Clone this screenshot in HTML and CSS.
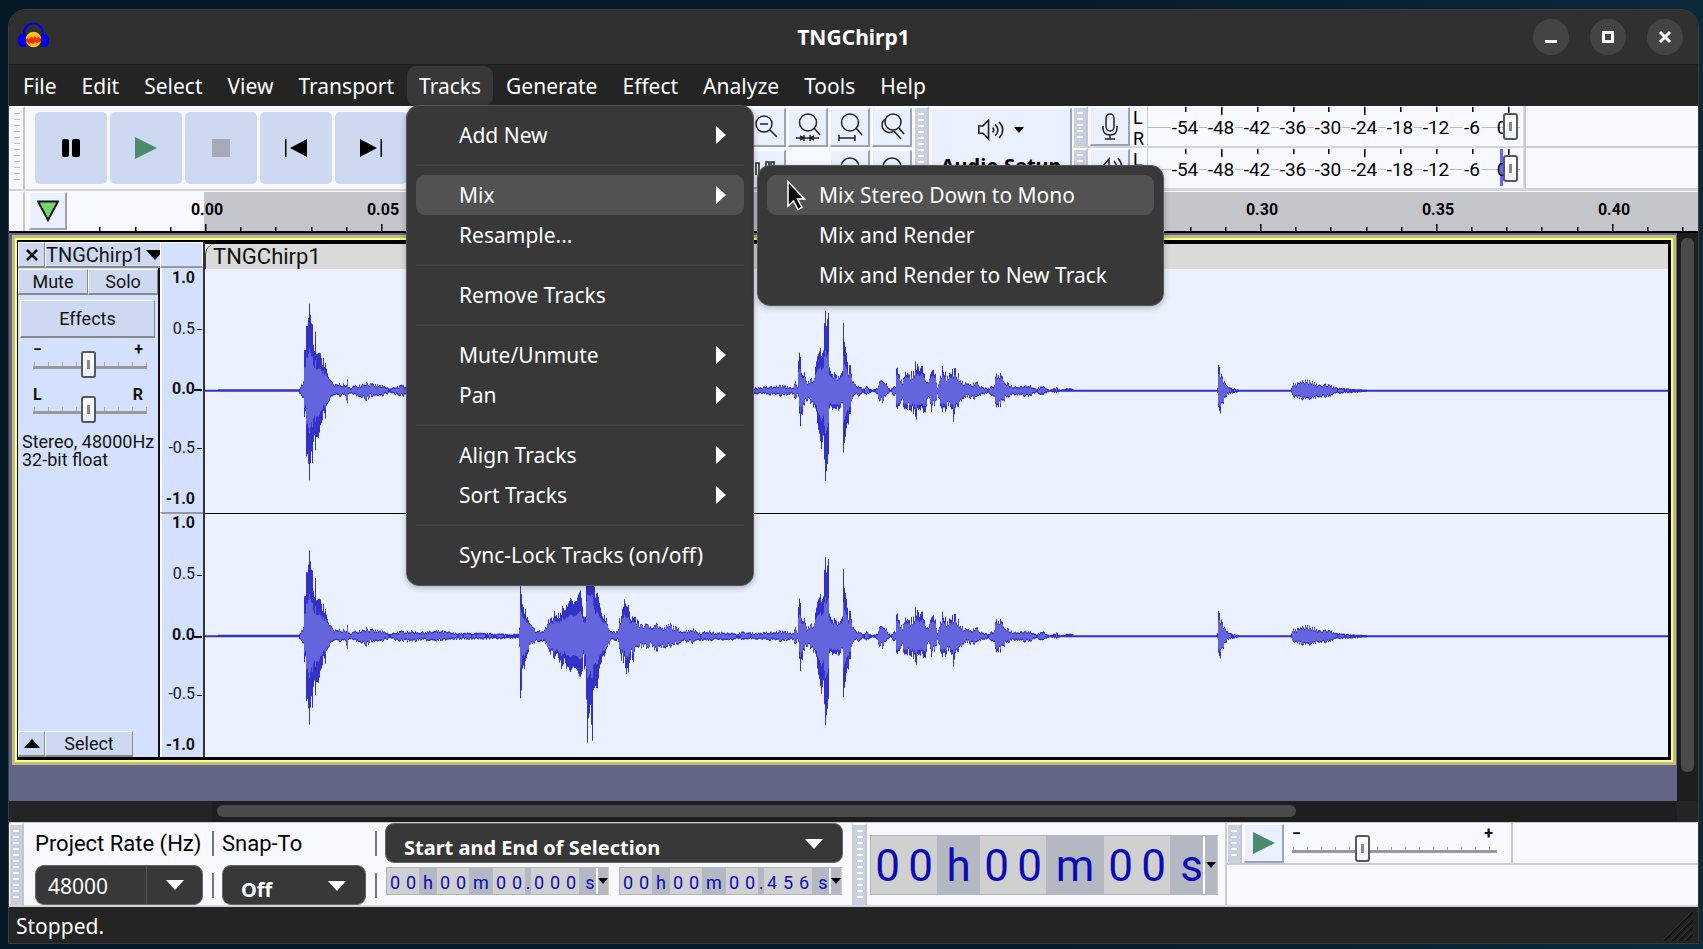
FILE: index.html
```html
<!DOCTYPE html>
<html lang="en">
<head>
<meta charset="utf-8">
<title>TNGChirp1</title>
<link rel="stylesheet" href="styles.css">
</head>
<body>
<div class="window">
  <header class="titlebar">
    <svg class="app-icon" width="32" height="32" viewBox="0 0 32 32">
      <path d="M7 17V12a9.500 9.500 0 0 1 19 0v5" fill="none" stroke="#0000f0" stroke-width="2.200"/>
      <circle cx="16.500" cy="18.500" r="7.800" fill="#ffc21a"/>
      <path d="M9 18l2-1 1 1 2-2 2 1 2-2 1 2 3-1 2 2v3l-2 0-2 1-2-1-2 2-2-1-2 1-2-2-1 1z" fill="#ff2a00"/>
      <ellipse cx="5" cy="19.500" rx="4.200" ry="6.500" fill="#0000f0"/><ellipse cx="28" cy="19.500" rx="4.200" ry="6.500" fill="#0000f0"/>
      <path d="M8 12v14M25 12v14" stroke="#0000c8" stroke-width="2"/>
    </svg>
    <h1 class="title">TNGChirp1</h1>
    <div class="window-buttons">
      <button class="round" aria-label="Minimize"><svg width="14" height="14"><path d="M1 11.500h12" stroke="#fff" stroke-width="3"/></svg></button>
      <button class="round" aria-label="Maximize"><svg width="14" height="14"><path d="M2.500 2.500h9v9h-9z" fill="none" stroke="#fff" stroke-width="3"/></svg></button>
      <button class="round" aria-label="Close"><svg width="14" height="14"><path d="M2 2l10 10M12 2L2 12" stroke="#fff" stroke-width="3"/></svg></button>
    </div>
  </header>

  <nav class="menubar">
    <button>File</button><button>Edit</button><button>Select</button><button>View</button><button>Transport</button>
    <div class="open-menu">
      <button class="active">Tracks</button>
      <div class="menu tracks-menu" role="menu">
        <button role="menuitem">Add New<i class="more"></i></button>
        <hr>
        <div class="parent">
          <button class="hover" role="menuitem">Mix<i class="more"></i></button>
          <div class="menu submenu" role="menu">
            <button class="hover" role="menuitem">Mix Stereo Down to Mono</button>
            <button role="menuitem">Mix and Render</button>
            <button role="menuitem">Mix and Render to New Track</button>
            <svg class="cursor" width="22" height="32" viewBox="0 0 22 32"><path d="M2 1.500V26l5.500-5 4.500 8.500 4-2-4.500-8.500h7z" fill="#0c0c0c" stroke="#fff" stroke-width="1.500"/></svg>
          </div>
        </div>
        <button role="menuitem">Resample...</button>
        <hr>
        <button role="menuitem">Remove Tracks</button>
        <hr>
        <button role="menuitem">Mute/Unmute<i class="more"></i></button>
        <button role="menuitem">Pan<i class="more"></i></button>
        <hr>
        <button role="menuitem">Align Tracks<i class="more"></i></button>
        <button role="menuitem">Sort Tracks<i class="more"></i></button>
        <hr>
        <button role="menuitem">Sync-Lock Tracks (on/off)</button>
      </div>
    </div>
    <button>Generate</button><button>Effect</button><button>Analyze</button><button>Tools</button><button>Help</button>
  </nav>

  <section class="toolbars">
    <div class="grip pale"><i></i></div>
    <div class="transport">
      <button aria-label="Pause"><svg width="18" height="18"><rect width="7" height="18" rx="2"/><rect x="10" width="8" height="18" rx="2"/></svg></button>
      <button aria-label="Play"><svg width="22" height="22"><path d="M0 0l22 11L0 22z" fill="#4b8a6c"/></svg></button>
      <button aria-label="Stop"><svg width="18" height="18"><rect width="18" height="18" fill="#a5aab4"/></svg></button>
      <button aria-label="Skip to start"><svg width="22" height="18"><path d="M0 0h1.500v18H0zM22 0v18L5 9z"/></svg></button>
      <button aria-label="Skip to end"><svg width="22" height="18"><path d="M20.500 0H22v18h-1.500zM0 0v18l17-9z"/></svg></button>
    </div>
    <div class="zoom">
      <button aria-label="Zoom out"><svg class="line" viewBox="0 0 26 28"><circle cx="11" cy="11" r="8"/><path d="M7 11h8M17 17l7 7"/></svg></button>
      <button aria-label="Fit selection"><svg class="line" viewBox="0 0 26 28"><circle cx="13" cy="9.500" r="8.500"/><path d="M19 15l6 7M1 25h23M9 22v6M15 22v6M5 23l4 2-4 2M19 23l-4 2 4 2"/></svg></button>
      <button aria-label="Fit project"><svg class="line" viewBox="0 0 26 28"><circle cx="13" cy="9.500" r="8.500"/><path d="M19 15l6 7M2 25h16M2 22v6M18 22v6"/></svg></button>
      <button aria-label="Zoom toggle"><svg class="line" viewBox="0 0 26 28"><circle cx="14" cy="9" r="8"/><path d="M20 15l5 6M6 6a7 7 0 1 0 9 12M15 18l7 8"/></svg></button>
      <button aria-label="Silence audio"><svg class="line" viewBox="0 0 26 28"><path d="M-3 20V8h3v12M3 20V8h3v12M13 20V7h3v13M18 20V7h3v13"/></svg></button>
      <span></span>
      <button aria-label="Undo"><svg class="line" viewBox="0 0 26 28"><path d="M4 12a9 9 0 0 1 18 0"/></svg></button>
      <button aria-label="Redo"><svg class="line" viewBox="0 0 26 28"><path d="M4 12a9 9 0 0 1 18 0"/></svg></button>
    </div>
    <div class="grip"><i></i></div>
    <button class="audio-setup">
      <span class="speaker"><svg class="line" width="32" height="28" viewBox="0 0 32 28"><path d="M1 9h5l7-7v23l-7-7H1zM18 11q3 3 0 6M21 7q7 7 0 14M26 4q9 10 0 20" stroke-width="2"/></svg><i class="down small"></i></span>
      <span>Audio Setup</span>
    </button>
    <div class="meters">
      <div class="meter-row">
        <div class="grip"><i></i></div>
        <button class="meter-button" aria-label="Record meter"><svg class="line" viewBox="0 0 26 28"><rect x="9" y="2" width="8" height="17" rx="4"/><path d="M6 14v2q0 7 7 7t7-7v-2M13 23v4M8 27h10"/></svg></button>
        <div class="lr"><span>L</span><span>R</span></div>
        <div class="meter" data-meter="record"><input type="range" class="knob" aria-label="Recording level" value="100"></div>
      </div>
      <div class="meter-row">
        <div class="grip"><i></i></div>
        <button class="meter-button" aria-label="Playback meter"><svg class="line" viewBox="0 0 26 28"><path d="M2 12h4l6-7v18l-6-7H2zM17 7q6 7 0 14M21 4q8 10 0 20"/></svg></button>
        <div class="lr"><span>L</span><span>R</span></div>
        <div class="meter playing" data-meter="play"><input type="range" class="knob" aria-label="Playback level" value="100"></div>
      </div>
    </div>
    <div class="dock-space"><i></i><i></i></div>
  </section>

  <section class="timeline">
    <div class="grip pale"></div>
    <button class="pin" aria-label="Pin play head"><svg width="22" height="22"><path d="M1 1.500h20L11 20z" fill="#74d66e" stroke="#111" stroke-width="2"/></svg></button>
    <svg class="ruler" id="ruler" height="41"></svg>
  </section>

  <main class="workspace">
    <div class="tracks">
      <article class="track">
        <aside class="panel">
          <div class="panel-row name-row"><button class="bevel close" aria-label="Close track"><svg width="12" height="12"><path d="M1 1l10 10M11 1L1 11" stroke="#000" stroke-width="2.500"/></svg></button><button class="bevel name">TNGChirp1<i class="down"></i></button></div>
          <div class="panel-row"><button class="bevel">Mute</button><button class="bevel">Solo</button></div>
          <button class="bevel effects">Effects</button>
          <div class="slider-block"><div class="ends"><span>−</span><span>+</span></div><input class="scale" type="range" aria-label="Gain" value="48"></div>
          <div class="slider-block pan"><div class="ends"><span>L</span><span>R</span></div><input class="scale" type="range" aria-label="Pan" value="48"></div>
          <p class="format">Stereo, 48000Hz<br>32-bit float</p>
          <div class="panel-row foot"><button class="bevel close" aria-label="Collapse"><svg width="16" height="9"><path d="M0 9l8-9 8 9z"/></svg></button><button class="bevel select">Select</button></div>
        </aside>
        <div class="vrulers">
          <div class="vcap"></div>
          <div class="vruler"><b>1.0</b><span class="q1">0.5</span><b class="mid">0.0</b><span class="q3">-0.5</span><b>-1.0</b></div>
          <div class="vruler"><b>1.0</b><span class="q1">0.5</span><b class="mid">0.0</b><span class="q3">-0.5</span><b>-1.0</b></div>
        </div>
        <div class="clip">
          <div class="clip-name">TNGChirp1</div>
          <svg class="wave" viewBox="205 -121 1463 242" preserveAspectRatio="none"></svg>
          <svg class="wave" viewBox="205 -123 1463 245" preserveAspectRatio="none"></svg>
        </div>
      </article>
    </div>
    <div class="vscroll"><i></i></div>
  </main>
  <div class="hscroll"><div><i></i></div></div>

  <section class="bottombars">
    <div class="grip"><i></i></div>
    <div class="selection-bar">
      <label class="rate-label" for="rate">Project Rate (Hz)</label>
      <i class="bar"></i>
      <label for="snap">Snap-To</label>
      <i class="bar"></i>
      <div class="combo"><input id="rate" value="48000"><button aria-label="Choose rate"><i class="down light"></i></button></div>
      <i class="bar"></i>
      <div class="pick"><select id="snap"><option>Off</option></select><i class="down light"></i></div>
      <i class="bar"></i>
    </div>
    <div class="range">
      <div class="pick wide"><select aria-label="Selection format"><option>Start and End of Selection</option></select><i class="down light"></i></div>
      <div class="times">
        <div class="time"><span class="d">0</span><span class="d">0</span><span class="u">h</span><span class="d">0</span><span class="d">0</span><span class="u m">m</span><span class="d">0</span><span class="d">0</span><span class="dot">.</span><span class="d">0</span><span class="d">0</span><span class="d">0</span><span class="u s">s</span><button aria-label="Start format"><i class="down small"></i></button></div>
        <div class="time"><span class="d">0</span><span class="d">0</span><span class="u">h</span><span class="d">0</span><span class="d">0</span><span class="u m">m</span><span class="d">0</span><span class="d">0</span><span class="dot">.</span><span class="d">4</span><span class="d">5</span><span class="d">6</span><span class="u s">s</span><button aria-label="End format"><i class="down small"></i></button></div>
      </div>
    </div>
    <div class="grip ruled"><i></i></div>
    <div class="time big"><span class="d">0</span><span class="d">0</span><span class="u">h</span><span class="d">0</span><span class="d">0</span><span class="u m">m</span><span class="d">0</span><span class="d">0</span><span class="u s">s</span><button aria-label="Time format"><i class="down small"></i></button></div>
    <div class="play-speed">
      <div class="speed-row">
        <div class="grip"><i></i></div>
        <button class="meter-button" aria-label="Play at speed"><svg width="22" height="22"><path d="M0 0l22 11L0 22z" fill="#4b8a6c"/></svg></button>
        <div class="slider-block speed"><div class="ends"><span>−</span><span>+</span></div><input class="scale" type="range" aria-label="Speed" value="33"></div>
        <div class="speed-rest"></div>
      </div>
    </div>
  </section>

  <footer class="status"><span>Stopped.</span>
    <svg width="30" height="30"><path d="M1 30L30 1M9 30L30 9M16 30l14-14M23 30l7-7" stroke="#161616" stroke-width="3"/><path d="M-1 30L30-1M7 30L30 7M14 30l16-16M21 30l9-9" stroke="#343434"/></svg>
  </footer>
</div>
<script src="app.js"></script>
</body>
</html>
```
FILE: styles.css
```css
* { box-sizing: border-box; }
body { margin: 0; height: 100vh; padding: 9px 4px 5px 8px; background: linear-gradient(90deg, #051927, #071a28 60%, #0a2a3a); font-family: "Noto Sans", sans-serif; font-size: 21px; color: #fff; }
button, input, select { font: inherit; color: inherit; border: 0; padding: 0; margin: 0; background: none; }
button { display: flex; align-items: center; justify-content: center; }
svg { display: block; flex: none; }
.window { height: 100%; display: flex; flex-direction: column; border: 1px solid #3c3c3c; border-radius: 18px 18px 0 0; background: #242424; }
.line { width: 26px; height: 28px; fill: none; stroke: #222; stroke-width: 1.500; overflow: visible; }

.titlebar { height: 55px; flex: none; display: grid; grid-template-columns: 1fr auto 1fr; align-items: center; background: #303030; border-bottom: 1px solid #1e1e1e; border-radius: 17px 17px 0 0; padding: 0 15px; }
.app-icon { margin-left: -7px; }
.title { margin: 0; font-size: 21px; font-weight: 700; }
.window-buttons { display: flex; gap: 21px; justify-self: end; }
.round { width: 36px; height: 36px; border-radius: 50%; background: #444; }

.menubar { height: 41px; flex: none; display: flex; gap: 1px; padding-left: 2px; position: relative; z-index: 5; }
.menubar > button, .open-menu > button { padding: 0 12px; height: 40px; margin-top: 1px; border-radius: 9px; white-space: nowrap; }
.active { background: #383838; }
.open-menu { position: relative; }
.menu { position: absolute; background: #383838; border: 1px solid #555; border-radius: 13px; padding: 9px 9px 10px; box-shadow: 0 2px 6px rgba(0,0,0,.25); }
.tracks-menu { left: -1px; top: 40px; width: 348px; }
.submenu { left: calc(100% + 13px); top: -10px; width: 407px; }
.menu button { width: 100%; height: 40px; border-radius: 9px; padding: 0 18px 0 43px; justify-content: space-between; white-space: nowrap; }
.submenu button { padding-left: 52px; }
.menu .hover { background: #525252; }
.menu hr { border: 0; border-top: 2px solid #434343; margin: 9px 0; }
.parent { position: relative; }
.more { border-left: 10px solid #fff; border-top: 9px solid transparent; border-bottom: 9px solid transparent; }
.cursor { position: absolute; left: 28px; top: 14px; }
.down { display: inline-block; flex: none; border-top: 10px solid #000; border-left: 9px solid transparent; border-right: 9px solid transparent; }
.down.light { border-top-color: #fff; }
.down.small { border-width: 6px 5px 0; }

.toolbars { height: 85px; flex: none; display: flex; background: #f8f9ff; color: #000; font-family: Roboto, sans-serif; border-bottom: 2px solid #d4d5da; overflow: hidden; }
.grip { width: 15px; flex: none; background: #c9d0e2; border-right: 2px solid #c5c7ce; border-left: 1px solid #fff; border-top: 2px solid #fff; display: flex; justify-content: center; padding: 5px 0; }
.grip i { width: 6px; background: repeating-linear-gradient(#fff 0 2px, transparent 2px 6px); }
.grip.pale { width: 16px; background: #f8f9ff; }
.grip.pale i { background: repeating-linear-gradient(#bbb 0 1px, transparent 1px 6px); }
.transport { width: 721px; flex: none; display: flex; gap: 3px; padding: 6px 0 5px 10px; }
.transport button { width: 72px; background: #ccd9f1; border-radius: 5px; }
.zoom { display: grid; grid-template-columns: repeat(4, 40px); grid-template-rows: 39px 39px; gap: 3px 2px; padding-top: 2px; margin-right: 2px; }
.zoom button, .meter-button, .audio-setup, .pin { background: #eaf0ff; border-right: 2px solid #9aa3b8; border-bottom: 2px solid #9aa3b8; border-left: 1px solid #fff; border-top: 1px solid #fff; }
.audio-setup { flex: none; width: 141px; margin: 2px 1px 0 2px; flex-direction: column; justify-content: flex-start; gap: 9px; padding-top: 7px; font-weight: 700; font-family: "Noto Sans", sans-serif; font-size: 20px; line-height: 26px; white-space: nowrap; }
.speaker { display: flex; align-items: center; gap: 10px; }
.meters { flex: none; width: 451px; display: flex; flex-direction: column; }
.meter-row { height: 42px; flex: none; display: flex; border-bottom: 2px solid #d4d5da; }
.meter-row .grip { padding: 4px 0; }
.meter-button { width: 40px; flex: none; margin: 1px 2px 0; }
.lr { width: 15px; padding: 1px 0 0 1px; font-size: 18px; line-height: 21px; display: flex; flex-direction: column; }
.meter { flex: 1; position: relative; border-left: 1px solid #ccc; border-right: 1px solid #ddd; }
.knob { position: absolute; right: 5px; top: 7px; width: 15px; height: 27px; appearance: none; }
.dock-space { flex: 1; border-left: 2px solid #ccc; }
.dock-space i { display: block; height: 42px; border-bottom: 2px solid #ccc; }

input[type=range] { appearance: none; margin: 0; }
input[type=range]::-webkit-slider-thumb { appearance: none; width: 15px; height: 27px; border: 2px solid #55585c; border-radius: 3px; background: linear-gradient(#888, #888) center / 3px 9px no-repeat, linear-gradient(#fff, #eef1f8); }

.timeline { height: 42px; flex: none; display: flex; background: #f8f9ff; border-bottom: 2px solid #000; }
.pin { width: 38px; flex: none; margin: 1px 0 1px 4px; }
.ruler { flex: 1; min-width: 0; }
text { font-family: Roboto, sans-serif; fill: #000; }

.workspace { flex: 1; min-height: 0; display: flex; background: #626583; color: #111; font-family: Roboto, sans-serif; font-size: 18px; }
.tracks { flex: 1; min-width: 0; padding: 3px 2px 40px 1px; display: grid; }
.track { display: flex; margin: 4px 4px 4px 7px; border: solid #000; border-width: 2px 3px 3px 1px; box-shadow: 0 0 0 2px #ffff80, 0 0 0 5px #bdbd85; background: #ebf1ff; }
.panel { width: 142px; flex: none; background: #d4e1fe; border-right: 2px solid #111; display: flex; flex-direction: column; }
.panel-row { display: flex; height: 26px; flex: none; margin-bottom: 1px; }
.bevel { flex: 1; background: #ccd9f1; border: 1px solid #fff; border-right-color: #888; border-bottom: 2px solid #888; white-space: nowrap; }
.close { flex: none; width: 27px; }
.name { gap: 2px; font-size: 20px; }
.effects { flex: none; height: 38px; margin: 4px 3px 0 2px; }
.slider-block { margin: 5px 11px 0 15px; height: 39px; }
.ends { display: flex; justify-content: space-between; font-size: 16px; line-height: 14px; height: 12px; padding-right: 4px; font-weight: 700; }
.pan { margin-top: 6px; }
.scale { display: block; width: 100%; height: 27px; margin-top: -4px !important; background: linear-gradient(#999, #999) 0 15px / 100% 3px no-repeat, repeating-linear-gradient(90deg, #aaa 0 1px, transparent 1px 14px) 1px 11px / 100% 4px no-repeat; }
.format { margin: 6px 0 0 4px; line-height: 18px; white-space: nowrap; }
.foot { margin-top: auto; margin-bottom: 0; }
.select { flex: none; width: 88px; }
.vrulers { width: 45px; flex: none; background: #d4e1fe; border-right: 2px solid #333; display: flex; flex-direction: column; font-size: 16px; line-height: 20px; }
.vcap { height: 26px; flex: none; border: 1px solid #fff; border-bottom: 2px solid #999; }
.vruler { flex: 1; position: relative; display: flex; flex-direction: column; justify-content: space-between; align-items: flex-end; padding: 0 8px 3px 0; border-left: 2px solid #fff; }
.vruler + .vruler { border-top: 2px solid #999; line-height: 18px; }
.vruler span::after, .mid::after { content: ""; position: absolute; right: 1px; width: 5px; height: 1px; background: #000; margin-top: 10px; }
.mid::after { width: 8px; height: 2px; }
.q1 { margin-bottom: 10px; }
.q3 { margin-top: 8px; }
.clip { flex: 1; min-width: 0; display: flex; flex-direction: column; border-top: 2px solid #000; }
.clip-name { height: 25px; flex: none; background: #dadada; border-radius: 10px 0 0 0; border-left: 1px solid #333; padding-left: 7px; font-size: 22px; line-height: 26px; }
.wave { flex: 1; min-height: 0; width: 100%; }
.wave + .wave { border-top: 1px solid #000; }
.vscroll { width: 21px; flex: none; background: #1e1e1e; padding: 5px 4px 29px; display: flex; }
.vscroll i { flex: 1; border-radius: 6px; background: #4a4a4a; }
.hscroll { height: 21px; flex: none; padding: 0 21px 0 203px; }
.hscroll div { background: #1e1e1e; height: 100%; padding: 4px 26% 5px 5px; }
.hscroll i { display: block; height: 12px; border-radius: 6px; background: #4a4a4a; }

.bottombars { height: 85px; flex: none; display: flex; background: #f8f9ff; color: #000; border-top: 1px solid #ccc; border-bottom: 2px solid #d4d5da; font-family: Roboto, sans-serif; }
.selection-bar { display: grid; grid-template-columns: 168px 19px 144px 19px; grid-template-rows: 40px 40px; row-gap: 2px; align-items: center; padding-left: 11px; font-size: 22px; white-space: nowrap; flex: none; }
.bar { width: 2px; height: 25px; background: #777; justify-self: center; }
.combo, .pick { height: 40px; background: #383838; color: #fff; border: 1px solid #666; border-radius: 9px; display: flex; font-family: "Noto Sans", sans-serif; font-size: 21px; }
.combo input { width: 111px; padding: 2px 0 0 12px; border-right: 1px solid #555; }
.combo button { flex: 1; }
.pick { position: relative; }
.pick select { appearance: none; width: 100%; padding: 9px 0 0 18px; font-weight: 700; font-size: 20px; }
.pick .down { position: absolute; right: 19px; top: 15px; pointer-events: none; }
.range { width: 467px; flex: none; }
.range .wide { width: 458px; }
.times { display: flex; gap: 10px; padding: 4px 0 0 1px; }
.time { display: flex; height: 28px; background: #b4b8c2; border: 1px solid #b0b5bf; border-right-color: #d0d0d0; color: #0a0ab8; font-size: 18px; line-height: 30px; text-align: center; width: 223px; flex: none; }
.d { flex: 0 0 16px; background: #d0d0d0; }
.u { flex: 0 0 18px; }
.m { flex-basis: 24px; }
.dot { flex: 0 0 6px; }
.s { flex-basis: 17px; padding-left: 5px; }
.time button { flex: 1; border-left: 2px solid #fff; }
.ruled { border-left: 2px solid #ccc; margin-right: 3px; }
.big { width: 348px; height: 60px; margin-top: 12px; font-size: 44px; line-height: 60px; }
.big .d { flex-basis: 33px; }
.big .u { flex-basis: 43px; }
.big .m { flex-basis: 58px; }
.big .s { flex-basis: 33px; padding-left: 10px; }
.play-speed { flex: 1; min-width: 0; margin-left: 7px; border-left: 2px solid #ccc; }
.speed-row { height: 42px; display: flex; border-bottom: 2px solid #ccc; }
.speed { width: 205px; margin: 4px 14px 0 6px; height: 36px; }
.speed .scale { background: linear-gradient(#999, #999) 0 15px / 100% 3px no-repeat, repeating-linear-gradient(90deg, #aaa 0 1px, transparent 1px 14px) 1px 12px / 100% 3px no-repeat; }
.speed-rest { flex: 1; border-left: 2px solid #ccc; }
.status { height: 36px; flex: none; display: flex; justify-content: space-between; align-items: center; padding: 2px 5px 0 7px; }
```
FILE: app.js
```js
const NS = 'http://www.w3.org/2000/svg';
function add(parent, tag, attrs, text) {
  const el = document.createElementNS(NS, tag);
  for (const k in attrs) el.setAttribute(k, attrs[k]);
  if (text) el.textContent = text;
  parent.appendChild(el);
  return el;
}

// Time ruler: five divisions of 0.01 s between labels.
const ruler = document.getElementById('ruler');
add(ruler, 'rect', {x: 137, y: 1, width: '100%', height: 39, fill: '#c5c6cc'});
for (let i = -3; i <= 42; i++) {
  const x = Math.round(138 + i * 35.17), major = i % 5 === 0;
  add(ruler, 'rect', {x: x, y: major ? 33 : 36, width: 1.5, height: major ? 7 : 4});
  if (major) add(ruler, 'text', {x: x + 2, y: 24, 'text-anchor': 'middle', 'font-size': 16, 'font-weight': 700}, (i / 100).toFixed(2));
}

// Level meters, in dB.
document.querySelectorAll('.meter').forEach(m => {
  const s = add(m, 'svg', {width: 372, height: 40});
  add(s, 'rect', {x: 0, y: 21, width: 372, height: 1, fill: '#bbb'});
  if (m.classList.contains('playing')) add(s, 'rect', {x: 352, y: 1, width: 3, height: 37, fill: '#6464ff'});
  for (let i = 0; i < 10; i++) {
    const x = Math.round(37 + i * 35.87), db = String(-54 + i * 6);
    add(s, 'rect', {x: x, y: 1, width: 1.5, height: i % 4 === 1 ? 8 : 5});
    const w = db.length * 9 + 1, cx = i === 9 ? x - 6 : x;
    if (i < 9) add(s, 'rect', {x: x - w / 2, y: 15, width: w, height: 13, fill: '#f8f9ff'});
    add(s, 'text', {x: cx, y: 28, 'text-anchor': 'middle', 'font-size': 19}, db);
  }
  m.insertBefore(s, m.firstChild);
});

// Envelope points: position, peak above zero, peak below zero.
const env = `205 1 1 217 1 1 218 1.5 1 298 1.5 1 300 4 4 303 8 7 304 40 24 305 40 24 306 65 65 307 64 65 308 72 73 309 85 88 310 77 72 311 66 60 312 66 72 313 45 50 314 40 45 315 58 60 316 37 47 318 37 47 320 38 35 322 27 30 325 25 22 328 15 12 331 8 6 334 5 4 340 7 5 345 5 5 347 9 10 348 3 3 352 4 4 360 6 5 366 8 9 370 6 5 380 5 5 390 2 2 395 4 4 405 5 5 420 4 4 440 5 4 455 3 3 475 3 3 518 2 2 519 12 13 520 50 62 521 43 54 522 32 33 524 27 27 526 18 18 529 12 10 532 8 7 537 5 5 543 5 5 546 10 8 550 17 17 555 22 22 560 25 25 562 31 30 565 25 26 570 38 36 573 33 31 576 36 33 580 47 42 582 30 35 583 18 25 585 16 27 586 70 65 587 90 107 588 85 85 590 80 70 592 100 105 593 60 55 595 40 50 597 45 53 599 34 33 602 20 20 607 13 10 611 5 4 617 4 4 619 14 13 621 17 22 624 37 27 626 30 38 628 25 28 631 20 15 632 18 25 634 20 15 638 12 11 642 12 10 646 10 11 650 10 9 655 13 14 662 7 9 670 11 10 677 7 7 684 5 5 692 7 6 700 3 4 707 5 5 715 3 3 728 4 4 736 2 3 740 4 3 756 3 3 775 4 4 780 5 5 793 3 3 795 8 9 797 3 3 798 27 5 799 38 28 800 33 35 801 22 25 803 18 15 806 9 9 810 12 10 813 12 13 815 22 20 817 35 32 820 42 50 821 35 57 823 40 45 824 66 68 825 82 90 826 66 80 828 78 65 829 18 14 832 15 16 836 14 15 841 18 17 842 18 17 843 68 63 844 50 53 846 37 38 848 22 27 850 20 18 852 8 8 855 5 4 859 4 5 862 2 2 866 4 4 872 1 1 877 3 3 879 10 10 882 10 10 886 6 5 890 1 1 893 4 4 895 4 4 896 22 20 898 18 13 902 8 8 905 16 22 908 13 15 912 17 20 916 26 27 919 22 20 922 20 18 925 13 17 928 8 6 931 16 18 932 18 14 935 15 12 937 3 4 940 12 12 943 23 20 946 14 15 950 18 17 953 20 24 956 17 15 960 10 10 966 6 6 972 7 7 976 9 7 980 4 4 988 2 2 993 5 6 996 14 13 999 15 14 1003 10 9 1008 7 6 1012 4 4 1025 5 5 1030 5 5 1035 2 2 1043 4 4 1049 1 1 1056 3 2 1060 1 1 1069 3 1 1074 1 1 1216 1 1 1217 3 3 1218 22 22 1219 22 23 1221 15 15 1224 8 8 1228 3 3 1233 2 2 1240 1 1 1290 1 1 1293 7 7 1298 7 6 1300 10 8 1306 9 8 1312 8 7 1318 5 6 1326 6 6 1335 3 3 1345 2 2 1370 1 1 1668 1 1`.split(' ').map(Number);
let seed = 7, k = 0, peak = '', rms = '';
const rand = () => (seed = (seed * 16807) % 2147483647) / 2147483647;
const body = a => a < 12 ? a - 1.5 : a * 0.42 + 6;
for (let x = 205; x <= 1668; x++) {
  while (k + 5 < env.length && env[k + 3] <= x) k += 3;
  const t = k + 5 < env.length ? (x - env[k]) / (env[k + 3] - env[k]) : 0;
  const at = j => {
    const v = env[k + j] + (t ? (env[k + 3 + j] - env[k + j]) * t : 0);
    if (v <= 1.5) return v;
    return v > 28 ? v * (0.97 + rand() * 0.05) : v * (0.7 + rand() * 0.6);
  };
  const up = at(1), dn = at(2);
  peak += `M${x} ${-up.toFixed(1)}h1V${dn.toFixed(1)}h-1z`;
  if (up > 2.2 && dn > 2.2) rms += `M${x} ${-Math.min(body(up), 42).toFixed(1)}h1V${Math.min(body(dn), 42).toFixed(1)}h-1z`;
}
document.querySelectorAll('.wave').forEach(w => {
  add(w, 'path', {d: peak, fill: '#3232c8'});
  add(w, 'path', {d: rms, fill: '#6464dc'});
});
```
